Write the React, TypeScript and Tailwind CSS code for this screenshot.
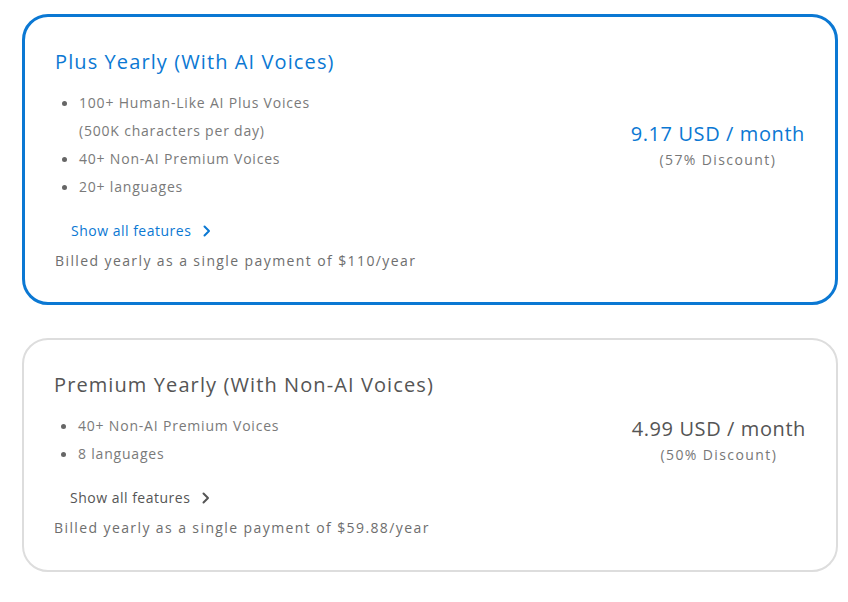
import React from "react";

type Plan = {
  title: string;
  features: string[][];
  price: string;
  discount: string;
  billed: string;
  active: boolean;
};

const plans: Plan[] = [
  {
    title: "Plus Yearly (With AI Voices)",
    features: [
      ["100+ Human-Like AI Plus Voices", "(500K characters per day)"],
      ["40+ Non-AI Premium Voices"],
      ["20+ languages"],
    ],
    price: "9.17 USD / month",
    discount: "(57% Discount)",
    billed: "Billed yearly as a single payment of $110/year",
    active: true,
  },
  {
    title: "Premium Yearly (With Non-AI Voices)",
    features: [["40+ Non-AI Premium Voices"], ["8 languages"]],
    price: "4.99 USD / month",
    discount: "(50% Discount)",
    billed: "Billed yearly as a single payment of $59.88/year",
    active: false,
  },
];

function Chevron({ color }: { color: string }) {
  return (
    <svg width="8" height="12" viewBox="0 0 8 12" fill="none" className="ml-[12px]">
      <path d="M1.5 1.5L6 6l-4.5 4.5" stroke={color} strokeWidth="2" strokeLinecap="round" strokeLinejoin="round" />
    </svg>
  );
}

function Card({ plan }: { plan: Plan }) {
  const a = plan.active;
  return (
    <div
      className={
        a
          ? "rounded-[26px] border-[3px] border-[#0b78d3] bg-white pl-[30px] pr-[30px] pt-[30px] pb-[31px]"
          : "rounded-[26px] border-2 border-[#dddddd] bg-white pl-[30px] pr-[30px] pt-[30px] pb-[32px]"
      }
    >
      <div className={"text-[20px] leading-[30px] tracking-[1.1px] " + (a ? "text-[#0b78d3]" : "text-[#555555]")}>
        {plan.title}
      </div>
      <div className="mt-[12px] flex items-center justify-between">
        <div className="flex flex-col">
          {plan.features.map((f, i) => (
            <div key={i} className="flex">
              <div className="w-[24px] shrink-0 h-[28px] flex items-center">
                <span className="ml-[7px] w-[5px] h-[5px] rounded-full bg-[#666666]" />
              </div>
              <div className="flex flex-col">
                {f.map((l, j) => (
                  <div key={j} className="text-[14px] leading-[28px] text-[#7a7a7a] tracking-[0.8px]">
                    {l}
                  </div>
                ))}
              </div>
            </div>
          ))}
        </div>
        <div className="flex flex-col items-center">
          <div className={"text-[20px] leading-[30px] tracking-[0.6px] " + (a ? "text-[#0b78d3]" : "text-[#555555]")}>
            {plan.price}
          </div>
          <div className="text-[14px] leading-[22px] text-[#777777] tracking-[1.4px]">{plan.discount}</div>
        </div>
      </div>
      <div className="mt-[20px] ml-[16px] flex items-center h-[20px]">
        <span
          className={"text-[14px] leading-[20px] font-medium tracking-[0.5px] " + (a ? "text-[#0b78d3]" : "text-[#555555]")}
        >
          Show all features
        </span>
        <Chevron color={a ? "#0b78d3" : "#555555"} />
      </div>
      <div className="mt-[10px] text-[14px] leading-[20px] text-[#6e6e6e] tracking-[1.4px]">{plan.billed}</div>
    </div>
  );
}

export default function App() {
  return (
    <div className="w-[848px] h-[602px] bg-white" style={{ fontFamily: '"Open Sans", "Liberation Sans", sans-serif' }}>
      <div className="ml-[22px] w-[816px] pt-[14px] flex flex-col gap-[33px]">
        {plans.map((p, i) => (
          <Card key={i} plan={p} />
        ))}
      </div>
    </div>
  );
}
